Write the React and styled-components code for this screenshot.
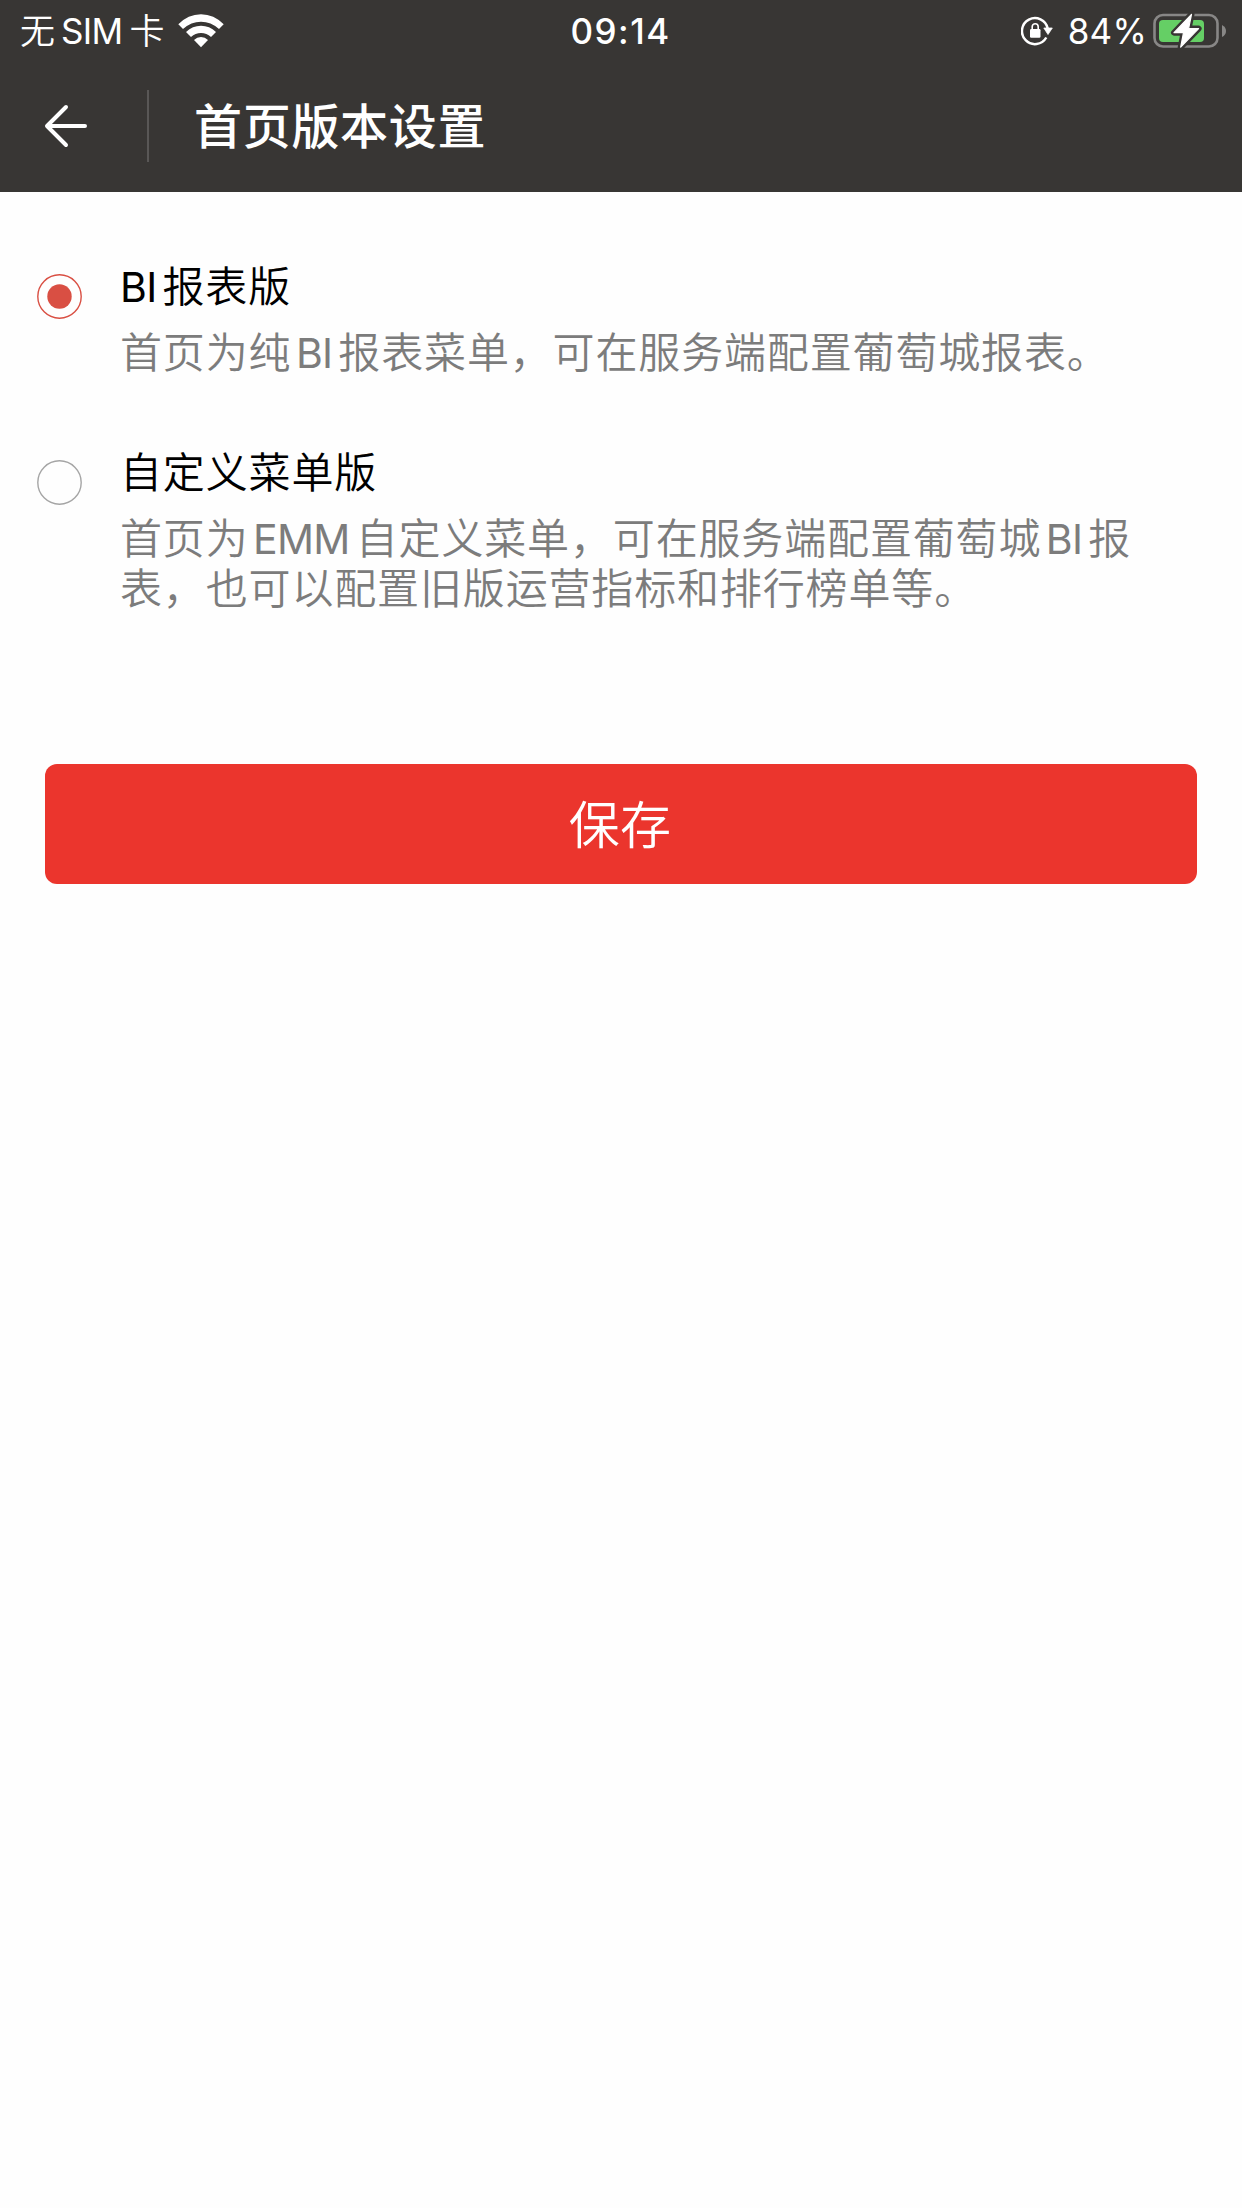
// libraries
import React, { useState } from 'react';
import styled, { createGlobalStyle } from 'styled-components';

// global
const g = {
  Font: `Inter, 'Noto Sans CJK SC', sans-serif`,
  Bar: '#383634',
  Radio: '#d94f43',
  Button: '#eb352d',
};

const GlobalStyle = createGlobalStyle`
  * {
    box-sizing: border-box;
  }

  body {
    margin: 0;
    background: #fefefe;
    font-family: ${g.Font};
    font-weight: 350;
  }
`;

// styled elements
const Page = styled.div`
  width: 1242px;
  min-height: 2208px;
  background: #fefefe;
`;

const Latin = styled.span`
  font-size: ${p => p.$size || 41}px;
  font-weight: 400;
  letter-spacing: -0.7px;
  margin: 0 ${p => p.$right ?? 6}px 0 ${p => p.$left ?? 4.5}px;
`;

const StatusBar = styled.div`
  display: grid;
  grid-template-columns: 1fr auto 1fr;
  align-items: center;
  height: 60px;
  padding: 1px 15px 1px 20px;
  background: ${g.Bar};
  color: #fff;
  font-size: 35px;
  line-height: 58px;
  white-space: nowrap;
`;

const StatusSide = styled.div`
  display: flex;
  align-items: center;
  justify-content: ${p => (p.$end ? 'flex-end' : 'flex-start')};
  height: 58px;
`;

const Carrier = styled.span`
  margin-right: 14px;
`;

const Time = styled.div`
  padding: 1px 6px 0 0;
  font-size: 35px;
  font-weight: 500;
  letter-spacing: 1.5px;
`;

const Percent = styled.span`
  margin: 0 6px 0 15px;
  padding-top: 1px;
  font-size: 35px;
  font-weight: 400;
  letter-spacing: 0.2px;
`;

const Header = styled.header`
  display: flex;
  align-items: center;
  height: 132px;
  background: ${g.Bar};
  color: #fff;
`;

const BackButton = styled.button`
  display: flex;
  align-items: center;
  width: 149px;
  height: 72px;
  padding: 0 0 0 44px;
  border: 0;
  border-right: 2px solid #595756;
  background: none;
  color: inherit;
`;

const Title = styled.h1`
  margin: 2px 0 0 45px;
  font-size: 48px;
  font-weight: 500;
  letter-spacing: 0.7px;
  line-height: 72px;
`;

const Options = styled.div`
  display: flex;
  flex-direction: column;
  gap: 70px;
  padding: 70px 36px 0 37px;
`;

const Option = styled.label`
  display: flex;
  align-items: flex-start;
`;

const RadioIcon = styled.svg`
  flex: none;
  width: 45px;
  height: 45px;
  margin: 12px 38px 0 0;
`;

const OptionText = styled.div`
  font-size: 42px;
  letter-spacing: 0.85px;
  white-space: nowrap;
`;

const OptionTitle = styled.div`
  color: #000;
  line-height: 50px;
`;

const OptionDesc = styled.div`
  margin-top: 16px;
  color: #7c7c7c;
  line-height: 50px;
`;

const SaveButton = styled.button`
  display: block;
  width: 1152px;
  height: 120px;
  margin: 150px auto 0;
  padding: 0 2px 5px 0;
  border: 0;
  border-radius: 12px;
  background: ${g.Button};
  color: #fff;
  font-family: inherit;
  font-size: 51px;
  font-weight: 350;
  letter-spacing: 0.2px;
`;

// icons
const WifiIcon = () => (
  <svg width="46" height="34" viewBox="0 0 46 34" fill="#fff">
    <path d="M0.3 10.3Q10 0.2 23 0.2T45.7 10.3L41 15Q33 7.7 23 7.7T5 15Z" />
    <path d="M8 18Q14.5 11.8 23 11.8T38 18L33 23Q28.7 19 23 19T13 23Z" />
    <path d="M16 26Q19 23 23 23T30 26L23 33.3Z" />
  </svg>
);

const LockIcon = () => (
  <svg width="32" height="30" viewBox="0 0 32 30" fill="none">
    <path d="M25.3 21.5A13 13 0 1 1 26.7 12.5" stroke="#fff" strokeWidth="2.5" />
    <path d="M22.8 12H31.3L27 18.5Z" fill="#fff" stroke="#fff" strokeWidth="0.8" strokeLinejoin="round" />
    <rect x="9" y="13" width="10.5" height="8.8" rx="1.2" fill="#fff" />
    <path d="M11.2 14V10.8A3 3 0 0 1 17.2 10.8V14" stroke="#fff" strokeWidth="1.6" />
  </svg>
);

const BatteryIcon = () => (
  <svg width="74" height="36" viewBox="0 0 74 36" fill="none">
    <rect x="1.5" y="2" width="63" height="31.5" rx="8.5" stroke="#888786" strokeWidth="2.6" />
    <path d="M69 12Q73 14 73 18T69 24Z" fill="#888786" />
    <rect x="6" y="7" width="45" height="22" rx="4" fill="#65cf65" />
    <path
      d="M38.5 1.3L21 19.7H30.5L27.7 34.2L45.6 15.6H35.6Z"
      fill="#fff"
      stroke={g.Bar}
      strokeWidth="6"
      strokeLinejoin="round"
    />
    <path
      d="M38.5 1.3L21 19.7H30.5L27.7 34.2L45.6 15.6H35.6Z"
      fill="#fff"
      stroke="#fff"
      strokeWidth="1.2"
      strokeLinejoin="round"
    />
  </svg>
);

const BackIcon = () => (
  <svg width="44" height="44" viewBox="0 0 44 44" fill="none">
    <path
      d="M22 3L3 22L22 41M3.5 22H41"
      stroke="#fff"
      strokeWidth="4"
      strokeLinecap="round"
      strokeLinejoin="round"
    />
  </svg>
);

const Radio = ({ checked }) => (
  <RadioIcon viewBox="0 0 45 45" fill="none">
    <circle cx="22.5" cy="22.5" r="21.7" stroke={checked ? g.Radio : '#a5a5a5'} strokeWidth="1.4" />
    {checked && <circle cx="22.5" cy="22.5" r="12.2" fill={g.Radio} />}
  </RadioIcon>
);

const App = () => {
  const [version, setVersion] = useState('bi');

  return (
    <Page>
      <GlobalStyle />

      <StatusBar>
        <StatusSide>
          <Carrier>无<Latin $size={35} $left={6} $right={7}>SIM</Latin>卡</Carrier>
          <WifiIcon />
        </StatusSide>
        <Time>09:14</Time>
        <StatusSide $end>
          <LockIcon />
          <Percent>84%</Percent>
          <BatteryIcon />
        </StatusSide>
      </StatusBar>

      <Header>
        <BackButton>
          <BackIcon />
        </BackButton>
        <Title>首页版本设置</Title>
      </Header>

      <Options>
        <Option onClick={() => setVersion('bi')}>
          <Radio checked={version === 'bi'} />
          <OptionText>
            <OptionTitle><Latin $left={0}>BI</Latin>报表版</OptionTitle>
            <OptionDesc>
              首页为纯<Latin>BI</Latin>报表菜单，可在服务端配置葡萄城报表。
            </OptionDesc>
          </OptionText>
        </Option>

        <Option onClick={() => setVersion('custom')}>
          <Radio checked={version === 'custom'} />
          <OptionText>
            <OptionTitle>自定义菜单版</OptionTitle>
            <OptionDesc>
              首页为<Latin>EMM</Latin>自定义菜单，可在服务端配置葡萄城<Latin>BI</Latin>报
              <br />
              表，也可以配置旧版运营指标和排行榜单等。
            </OptionDesc>
          </OptionText>
        </Option>
      </Options>

      <SaveButton>保存</SaveButton>
    </Page>
  );
};

export default App;
